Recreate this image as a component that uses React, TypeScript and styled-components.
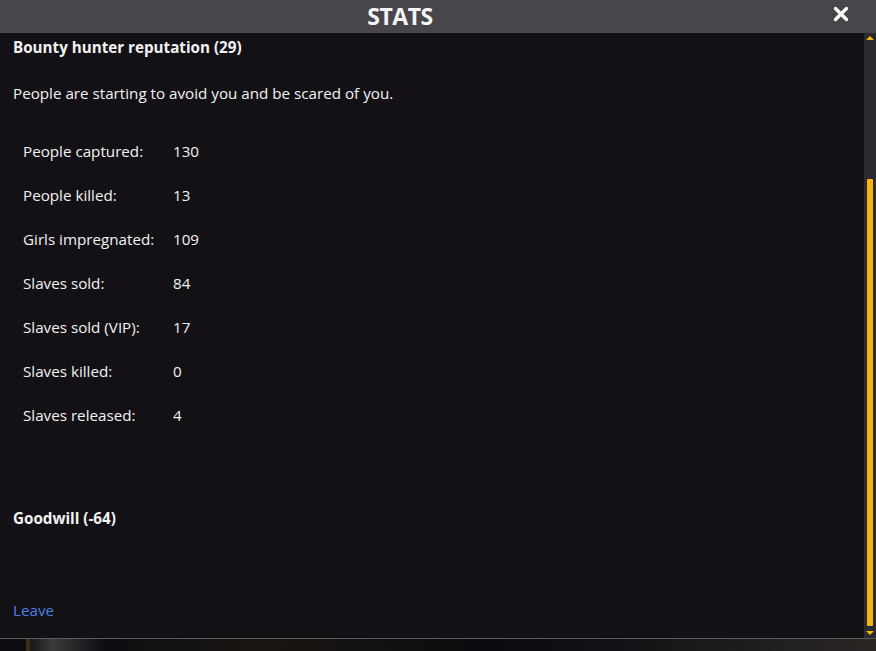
import styled, { createGlobalStyle } from 'styled-components'

const GlobalStyle = createGlobalStyle`
  html, body {
    margin: 0;
    padding: 0;
    background: #0c0b0e;
  }
  body {
    font-family: "Open Sans", "Noto Sans", sans-serif;
    color: #f2f2f2;
  }
`

const Window = styled.div`
  width: 876px;
  height: 651px;
  display: flex;
  flex-direction: column;
  overflow: hidden;
`

const Header = styled.div`
  height: 33px;
  flex: 0 0 auto;
  background: #48464b;
  position: relative;
  display: flex;
  align-items: center;
  justify-content: center;
  padding-right: 76px;
`

const Title = styled.h1`
  margin: 0;
  font-size: 23px;
  font-weight: 700;
  color: #f4f4f4;
  letter-spacing: -0.5px;
  line-height: 33px;
`

const Close = styled.button`
  position: absolute;
  right: 27px;
  top: 6px;
  width: 16px;
  height: 16px;
  padding: 0;
  border: none;
  background: none;
  cursor: pointer;
  display: flex;
`

const Body = styled.div`
  flex: 0 0 605px;
  display: flex;
  background: #131115;
  border-bottom: 1px solid #5b5a5d;
`

const Content = styled.div`
  flex: 1;
  padding: 0 13px;
  font-size: 15.2px;
  line-height: 20px;
`

const Heading = styled.div<{ $top: number }>`
  font-weight: 700;
  margin-top: ${p => p.$top}px;
`

const Paragraph = styled.p`
  margin: 26px 0 0;
`

const Table = styled.div`
  margin-top: 26px;
  padding-left: 10px;
`

const Row = styled.div`
  display: flex;
  align-items: center;
  height: 44px;
`

const Label = styled.span`
  width: 150px;
`

const Value = styled.span``

const Leave = styled.a`
  display: block;
  margin-top: 72px;
  color: #4b7fe6;
  cursor: pointer;
`

const Scrollbar = styled.div`
  flex: 0 0 12px;
  background: #2b2a2e;
  display: flex;
  flex-direction: column;
  align-items: center;
  padding: 3px 0 3px;
`

const Arrow = styled.div<{ $down?: boolean }>`
  width: 0;
  height: 0;
  border-left: 4px solid transparent;
  border-right: 4px solid transparent;
  ${p =>
    p.$down
      ? 'border-top: 4px solid #f5b50e; margin-top: 5px;'
      : 'border-bottom: 4px solid #f5b50e;'}
`

const Track = styled.div`
  flex: 1;
  width: 100%;
  display: flex;
  justify-content: center;
  align-items: flex-end;
`

const Thumb = styled.div`
  width: 6px;
  height: 447px;
  background: #f5b50e;
  border-radius: 1px;
`

const Backdrop = styled.div`
  flex: 1;
  background: linear-gradient(90deg, #0d0c10 0%, #0d0c10 3%, #3a3116 3%, #3a3116 3.3%, #1a1818 3.5%, #3a3a3c 6%, #0d0d12 12%, #1a1612 30%, #0b0b0f 55%, #121216 70%, #2a2624 100%);
`

const stats: [string, number][] = [
  ['People captured:', 130],
  ['People killed:', 13],
  ['Girls impregnated:', 109],
  ['Slaves sold:', 84],
  ['Slaves sold (VIP):', 17],
  ['Slaves killed:', 0],
  ['Slaves released:', 4],
]

const App = () => {
  return (
    <Window>
      <GlobalStyle />
      <Header>
        <Title>STATS</Title>
        <Close aria-label="Close">
          <svg width="16" height="16" viewBox="0 0 16 16">
            <path d="M2.5 2.5 L13.5 13.5 M13.5 2.5 L2.5 13.5" stroke="#fafafa" strokeWidth="3.4" strokeLinecap="round" />
          </svg>
        </Close>
      </Header>
      <Body>
        <Content>
          <Heading $top={4}>Bounty hunter reputation (29)</Heading>
          <Paragraph>People are starting to avoid you and be scared of you.</Paragraph>
          <Table>
            {stats.map(([label, value]) => (
              <Row key={label}>
                <Label>{label}</Label>
                <Value>{value}</Value>
              </Row>
            ))}
          </Table>
          <Heading $top={71}>Goodwill (-64)</Heading>
          <Leave>Leave</Leave>
        </Content>
        <Scrollbar>
          <Arrow />
          <Track>
            <Thumb />
          </Track>
          <Arrow $down />
        </Scrollbar>
      </Body>
      <Backdrop />
    </Window>
  )
}

export default App
